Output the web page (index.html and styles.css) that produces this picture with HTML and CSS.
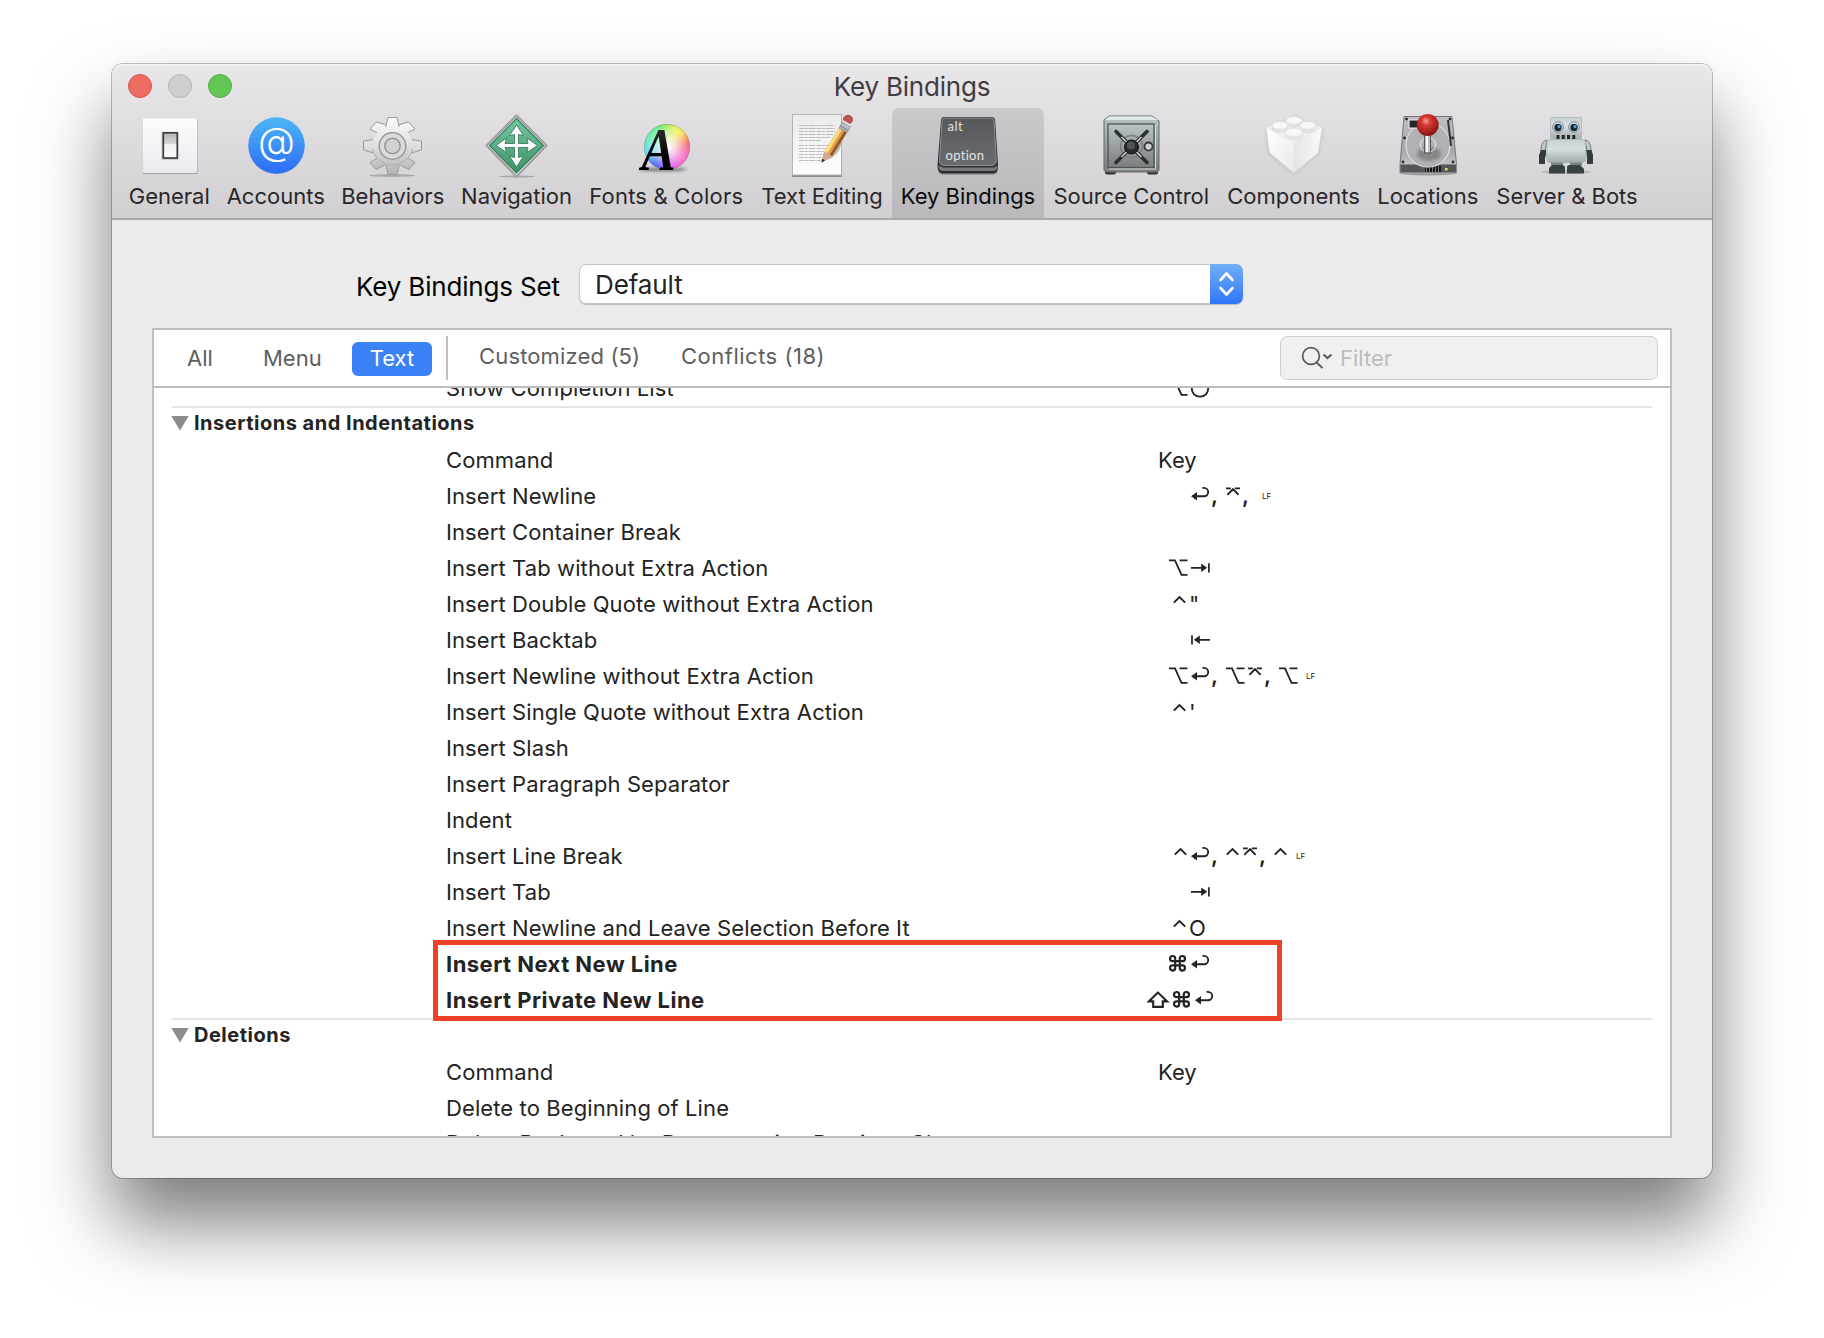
FILE: index.html
```html
<!DOCTYPE html>
<html lang="en">
<head>
<meta charset="utf-8">
<title>Key Bindings</title>
<link rel="stylesheet" href="styles.css">
</head>
<body>
<svg class="defs" width="0" height="0" aria-hidden="true">
  <defs>
    <linearGradient id="plate" x1="0" y1="0" x2="0" y2="1"><stop offset="0" stop-color="#fcfcfd"/><stop offset="1" stop-color="#e9ebef"/></linearGradient>
    <linearGradient id="toggle" x1="0" y1="0" x2="0" y2="1"><stop offset="0" stop-color="#b5b5b8"/><stop offset=".42" stop-color="#d4d4d6"/><stop offset=".45" stop-color="#f0f0f3"/><stop offset="1" stop-color="#fafafb"/></linearGradient>
    <linearGradient id="blue" x1="0" y1="0" x2="0" y2="1"><stop offset="0" stop-color="#4db7f6"/><stop offset="1" stop-color="#2c6cf5"/></linearGradient>
    <linearGradient id="metal" gradientUnits="userSpaceOnUse" x1="0" y1="10" x2="0" y2="66"><stop offset="0" stop-color="#fbfbfb"/><stop offset=".5" stop-color="#dededf"/><stop offset="1" stop-color="#b4b4b6"/></linearGradient>
    <linearGradient id="green" x1="0" y1="0" x2="0" y2="1"><stop offset="0" stop-color="#74c8a0"/><stop offset="1" stop-color="#3d9268"/></linearGradient>
    <linearGradient id="ink" x1="0" y1="0" x2="0" y2="1"><stop offset="0" stop-color="#444"/><stop offset=".6" stop-color="#000"/></linearGradient>
    <radialGradient id="glow"><stop offset="0" stop-color="#fff"/><stop offset=".35" stop-color="#fff" stop-opacity=".7"/><stop offset="1" stop-color="#fff" stop-opacity=".05"/></radialGradient>
    <linearGradient id="paper" x1="0" y1="0" x2="0" y2="1"><stop offset="0" stop-color="#ebebeb"/><stop offset="1" stop-color="#fdfdfd"/></linearGradient>
    <linearGradient id="key" x1="0" y1="0" x2="0" y2="1"><stop offset="0" stop-color="#56585b"/><stop offset="1" stop-color="#6a6c6f"/></linearGradient>
    <linearGradient id="safe" x1="0" y1="0" x2="0" y2="1"><stop offset="0" stop-color="#b9c5c8"/><stop offset="1" stop-color="#7b7d7e"/></linearGradient>
    <linearGradient id="drive" x1="0" y1="0" x2="0" y2="1"><stop offset="0" stop-color="#bfbfc3"/><stop offset=".7" stop-color="#a6a6ab"/><stop offset="1" stop-color="#c2c2c6"/></linearGradient>
    <radialGradient id="ball" cx=".42" cy=".32" r=".65"><stop offset="0" stop-color="#f6a29b"/><stop offset=".3" stop-color="#da3a35"/><stop offset="1" stop-color="#8c1414"/></radialGradient>
    <linearGradient id="bot" x1="0" y1="0" x2="0" y2="1"><stop offset="0" stop-color="#c6d0d3"/><stop offset=".4" stop-color="#d7dfe1"/><stop offset="1" stop-color="#a3abad"/></linearGradient>
    <linearGradient id="brickL" x1="0" y1="0" x2="1" y2="1"><stop offset="0" stop-color="#fff"/><stop offset="1" stop-color="#e9e9e9"/></linearGradient>
    <linearGradient id="brickR" x1="0" y1="0" x2="1" y2="0"><stop offset="0" stop-color="#e4e4e4"/><stop offset="1" stop-color="#fafafa"/></linearGradient>

    <symbol id="k-return" viewBox="0 0 20 36"><path d="M4 18.3h9a4.200 4.200 0 0 0 0-8.400H11.500" fill="none" stroke="#232323" stroke-width="1.900"/><path d="M0 18.300l6-4.200v8.400z" fill="#232323"/></symbol>
    <symbol id="k-enter" viewBox="0 0 16 36"><path d="M1.400 16.800l5.600-5.600 5.600 5.600M0 10.400h4.800M8.800 10.400H14" fill="none" stroke="#232323" stroke-width="1.900"/></symbol>
    <symbol id="k-option" viewBox="0 0 22 36"><path d="M0 10.300h6l6.500 14.600h6M10.600 10.300h7.900" fill="none" stroke="#232323" stroke-width="1.800"/></symbol>
    <symbol id="k-control" viewBox="0 0 16 36"><path d="M.8 16.600l5.700-5.500 5.700 5.500" fill="none" stroke="#232323" stroke-width="2"/></symbol>
    <symbol id="k-tab" viewBox="0 0 20 36"><path d="M0 17.800h11M17.900 13.200v9.300" fill="none" stroke="#232323" stroke-width="1.700"/><path d="M16.200 17.800l-6-4.200v8.400z" fill="#232323"/></symbol>
    <symbol id="k-backtab" viewBox="0 0 20 36"><path d="M8 17.800h11M1 13.200v9.300" fill="none" stroke="#232323" stroke-width="1.700"/><path d="M2.800 17.800l6-4.200v8.400z" fill="#232323"/></symbol>
    <symbol id="k-command" viewBox="0 0 22 36"><path d="M6.200 13.300v-.9a2.600 2.600 0 1 0-2.600 2.800h9.800a2.600 2.600 0 1 0-2.600-2.800v9.800a2.600 2.600 0 1 0 2.600-2.800H3.600a2.600 2.600 0 1 0 2.600 2.800z" fill="none" stroke="#232323" stroke-width="2.200"/></symbol>
    <symbol id="k-shift" viewBox="0 0 26 36"><path d="M11 10.600L1.800 19.400h4.400v5.500h9.600v-5.500h4.400z" fill="none" stroke="#232323" stroke-width="2.100"/></symbol>
    <symbol id="k-escape" viewBox="0 0 20 36"><path d="M4 12a8.200 8.200 0 1 0 10 0M9 17V8" fill="none" stroke="#232323" stroke-width="1.800"/></symbol>
  </defs>
</svg>

<main class="window">
  <header class="header">
    <div class="titlebar">
      <div class="lights"><span class="light close"></span><span class="light minimize"></span><span class="light zoom"></span></div>
      <h1 class="title">Key Bindings</h1>
    </div>
    <nav class="toolbar">
      <a class="tool"><svg class="tool-icon" viewBox="0 0 72 72">
        <rect x="9.500" y="11" width="55" height="55" rx="1.500" fill="#9da1a6"/><rect x="9.500" y="10.500" width="54.500" height="54.500" rx="1.500" fill="url(#plate)"/>
        <rect x="28.500" y="24" width="17" height="28" rx="1" fill="#000" opacity=".15"/><rect x="30.300" y="24.800" width="14" height="25.200" fill="url(#toggle)" stroke="#3c3c3e" stroke-width="1.700"/></svg>
        <span class="tool-label">General</span></a>
      <a class="tool"><svg class="tool-icon" viewBox="0 0 72 72">
        <circle cx="36.500" cy="38.300" r="28" fill="#8d98ad" opacity=".6"/><circle cx="36.500" cy="37.500" r="28.200" fill="url(#blue)"/>
        <text x="36.500" y="47" text-anchor="middle" class="at-sign">@</text></svg>
        <span class="tool-label">Accounts</span></a>
      <a class="tool"><svg class="tool-icon" viewBox="0 0 72 72">
        <ellipse cx="35" cy="67.500" rx="23" ry="1.500" fill="#888" opacity=".55"/>
        <g fill="url(#metal)" stroke="#97999c" stroke-width="1">
          <path d="M28.500 20l2.500-10.500h9l2.500 10.500z"/>
          <path d="M28.500 56l2.500 10.500h9l2.500-10.500z"/><path d="M17 31.500l-10.500 1.500v9l10.500 3z M54 31.500l10.500 1.500v9l-10.500 3z"/>
          <path d="M23 26l-10-5 6.500-7 9 2.500 2 6z M48 26l10-5-6.500-7-9 2.500-2 6z M22 49l-9 5.500 6 7 10-5zM49 49l9 5.500-6 7-10-5z"/>
        </g>
        <circle cx="35.500" cy="38" r="20.500" fill="url(#metal)"/><path d="M15.500 41a20.500 20.500 0 0 0 40 0" fill="none" stroke="#aeafb1"/>
        <circle cx="35.500" cy="38" r="13.300" fill="#dadadb" stroke="#8d8f93" stroke-width="1.300"/><circle cx="35.500" cy="38" r="7.700" fill="#d2d0d3" stroke="#8d8f93" stroke-width="1.300"/></svg>
        <span class="tool-label">Behaviors</span></a>
      <a class="tool"><svg class="tool-icon" viewBox="0 0 72 72">
        <ellipse cx="36" cy="68.500" rx="18" ry="1" fill="#888" opacity=".6"/>
        <path d="M35.500 7.500l30 30-30 31-30-31z" fill="#fafafa" stroke="#a2a2a2" stroke-width="2.400" stroke-linejoin="round"/>
        <path d="M35.500 10.500l27 27-27 27.500L8.500 37.500z" fill="url(#green)" stroke="#33795a" stroke-width="1.200"/>
        <path d="M35.500 17l7 10.500-5-1v9h9.500l-1-5.500 10.500 7.500-10.500 7 1-5H37.500v10l5-1.500-7 11-7-11 5 1.500V39.500H24l1.500 5L15 37.500l10.500-7.500-1.500 5.500h9.500v-9l-5 1z" fill="#fff" stroke="#2f7353" stroke-width=".8"/></svg>
        <span class="tool-label">Navigation</span></a>
      <a class="tool"><svg class="tool-icon" viewBox="0 0 72 72">
        <defs><filter id="soft" x="-50%" y="-50%" width="200%" height="200%"><feGaussianBlur stdDeviation="5"/></filter><filter id="dim" x="-50%" y="-150%" width="200%" height="400%"><feGaussianBlur stdDeviation="1.500"/></filter><clipPath id="wheel"><circle cx="37" cy="39" r="23"/></clipPath></defs>
        <ellipse cx="33" cy="61.500" rx="24" ry="2" fill="#333" opacity=".55" filter="url(#dim)"/>
        <g clip-path="url(#wheel)"><g filter="url(#soft)">
          <path d="M37 39L18 4h30z" fill="#63ea45"/><path d="M37 39l6-37 34 14z" fill="#f4f04d"/><path d="M37 39l35-22v34z" fill="#f2594f"/><path d="M37 39l36 5-22 34z" fill="#f45cc0"/><path d="M37 39l20 37H25z" fill="#d64bf3"/><path d="M37 39L34 76 2 60z" fill="#3d55f2"/><path d="M37 39L0 62V28z" fill="#4fdcf3"/><path d="M37 39L0 34 20 2z" fill="#58ea9c"/>
        </g><circle cx="37" cy="39" r="23" fill="url(#glow)"/></g>
        <circle cx="37" cy="39" r="22.600" fill="none" stroke="#8a8a8a" stroke-opacity=".45"/>
        <text x="11.500" y="62" class="letter-a" textLength="34" lengthAdjust="spacingAndGlyphs">A</text></svg>
        <span class="tool-label fonts">Fonts &amp; Colors</span></a>
      <a class="tool"><svg class="tool-icon" viewBox="0 0 72 72">
        <rect x="6" y="7" width="50" height="62" fill="#8f8f8f"/><rect x="6.500" y="6.500" width="49" height="60.500" fill="url(#paper)" stroke="#b2b2b2"/>
        <path d="M13 17.500h36M13 20.500h36M13 23.500h36M13 26.500h34M13 29.500h31M13 32.500h22M13 37.500h36M13 40.500h34M13 43.500h32M13 46.500h29M13 49.500h26M13 52.500h23" stroke="#bcbcbc" stroke-width="1" stroke-dasharray="5 .8 3 .8 7 .8"/>
        <path d="M37 53c9-2 16-7 18-16l.5-6-9 10z" fill="#555" opacity=".35"/>
        <path d="M36 54l2-10 15-24 8 4.500-15 24z" fill="#e0a04a"/><path d="M38 44l15-24 3 1.600L41 46z" fill="#f8dc80"/><path d="M46 48.500l15-24-2.600-1.500-15 24.500z" fill="#98592a"/>
        <path d="M36 54l2-10 4 1 4 3.500z" fill="#d9a98d"/><path d="M35.300 55l1-4.300 2.700 1.500z" fill="#222"/>
        <path d="M53 20l3.500-6 8 4.500-3.500 6z" fill="#b9bec1" stroke="#80868a" stroke-width=".8"/><path d="M54.300 18l8 4.500" stroke="#727b80"/><ellipse cx="62" cy="11.500" rx="4.600" ry="4.200" fill="#bd5353" stroke="#963838" stroke-width=".7"/><path d="M57 13l7.500 4.500" stroke="#e5e9eb" stroke-width="2"/></svg>
        <span class="tool-label">Text Editing</span></a>
      <a class="tool selected"><svg class="tool-icon" viewBox="0 0 72 72">
        <path d="M6 57c0 8 1 10 6 10h48c5 0 6-2 6-10z" fill="#555" opacity=".35"/>
        <path d="M13 9h46c3 0 4 1.500 4.200 4L66 57c0 6-1 8.500-6 8.500H12c-5 0-6.500-2.500-6.500-8.500L9 13c.3-3 1-4 4-4z" fill="#2d2e30"/>
        <path d="M6.500 57c2 2 4 2.500 8 2.500h44c4 0 6-.5 7-2.500 0 4-1 6-5.500 6H12c-4.500 0-5.500-2-5.500-6z" fill="#77787b"/>
        <path d="M14 10h44c3 0 4 1.500 4.200 4l2 37c.2 5-1.200 6.500-5 6.500H12.500c-4 0-5.200-1.500-5-6.500l2.500-37c.2-3 1-4 4-4z" fill="url(#key)" stroke="#8a9193"/>
        <text x="15.500" y="22.500" class="key-text">alt</text><text x="13.500" y="52" class="key-text" textLength="39">option</text></svg>
        <span class="tool-label">Key Bindings</span></a>
      <a class="tool"><svg class="tool-icon" viewBox="0 0 72 72">
        <rect x="10" y="62" width="11" height="4.500" rx="2" fill="#333"/><rect x="52" y="62" width="11" height="4.500" rx="2" fill="#333"/>
        <path d="M14 8h43l7 5v48c0 2-1 3-3 3H12c-2 0-3-1-3-3V12z" fill="url(#safe)" stroke="#64696b"/><path d="M14 8.500h43l6 3.500H10z" fill="#dfeaed"/>
        <rect x="13" y="16" width="46" height="43.500" fill="url(#safe)" stroke="#505557" stroke-width="1.300"/><path d="M60.500 17v44H14" fill="none" stroke="#d3d9da" stroke-width="1"/>
        <circle cx="36.500" cy="38.500" r="11" fill="none" stroke="#788083" stroke-width="1.600"/>
        <path d="M21 23.500l31 31M52 23.500l-31 31" stroke="#2b2d2e" stroke-width="3.600" stroke-linecap="round"/><path d="M26.500 29l20 20M46.500 29l-20 20" stroke="#d8dddd" stroke-width="1.400"/>
        <circle cx="36.500" cy="39" r="7" fill="#27292d" stroke="#111"/><circle cx="36" cy="37.500" r="4" fill="#50535a"/><circle cx="53.500" cy="38.500" r="4" fill="#cbd1d2" stroke="#35393b" stroke-width="1.800"/></svg>
        <span class="tool-label">Source Control</span></a>
      <a class="tool"><svg class="tool-icon" viewBox="0 0 72 72">
        <path d="M7 21l29-13 30 13-4 25-26 21-27-21z" fill="#999" opacity=".22" filter="url(#dim)"/>
        <path d="M36 10L8.500 19.500 36 35l28-15.500z" fill="#efefef"/><path d="M8.500 19.500L36 35v30L11.500 44.500z" fill="url(#brickL)"/><path d="M64 19.500L36 35v30l24-20.500z" fill="url(#brickR)"/>
        <g fill="#e2e2e2"><path d="M28 13v4c1 4 15 4 16 0v-4z"/><path d="M14 18v4c1 4 15 4 16 0v-4z"/><path d="M42 18v4c1 4 15 4 16 0v-4z"/><path d="M27.500 24.500v4c1 4.500 16 4.500 17 0v-4z"/></g>
        <g fill="#f8f8f8" stroke="#dcdcdc" stroke-width=".6"><ellipse cx="36" cy="12.500" rx="8" ry="3.700"/><ellipse cx="22" cy="17.500" rx="8" ry="3.800"/><ellipse cx="50" cy="17.500" rx="8" ry="3.800"/><ellipse cx="36" cy="24.500" rx="8.500" ry="4.200"/></g></svg>
        <span class="tool-label">Components</span></a>
      <a class="tool"><svg class="tool-icon" viewBox="0 0 72 72">
        <ellipse cx="36" cy="65" rx="29" ry="2.500" fill="#777" opacity=".6"/>
        <path d="M12 8.500h48l4.500 48H8z" fill="url(#drive)" stroke="#77777b"/><path d="M8 56.500h56.500v8H8z" fill="#55565b" stroke="#85868a"/><path d="M33 58h16v6H33z" fill="#17181a"/><path d="M34.500 58v6M37.500 58v6M40.500 58v6M43.500 58v6M46.500 58v6" stroke="#77787c"/><rect x="53" y="60" width="2.500" height="2.500" fill="#e1ed42"/>
        <circle cx="36" cy="37" r="22" fill="#b1b1b5" stroke="#dedee0" stroke-width="1.200"/><ellipse cx="37" cy="46" rx="12" ry="7" fill="#555" opacity=".45" filter="url(#dim)"/><circle cx="36" cy="37" r="7.500" fill="none" stroke="#ececee"/>
        <path d="M17 12h11v8H17z" fill="#25262a" stroke="#eee"/><path d="M56 12l3 26" stroke="#303134" stroke-width="2"/>
        <g fill="#292a2e"><circle cx="14.500" cy="11" r="1.400"/><circle cx="58" cy="11" r="1.400"/><circle cx="12.500" cy="30" r="1.400"/><circle cx="60.500" cy="30" r="1.400"/><circle cx="11" cy="54" r="1.400"/><circle cx="61" cy="54" r="1.400"/></g>
        <path d="M32.500 26h6v19h-6z" fill="#bdbdc0" stroke="#4c4c50" stroke-width=".9"/><path d="M35 27v17" stroke="#fff" stroke-width="1.700"/><circle cx="35.700" cy="17" r="11" fill="url(#ball)"/></svg>
        <span class="tool-label">Locations</span></a>
      <a class="tool"><svg class="tool-icon" viewBox="0 0 72 72">
        <ellipse cx="35" cy="64" rx="25" ry="2" fill="#888" opacity=".35"/>
        <path d="M19.500 9.500h31V31h-31z" fill="url(#bot)" stroke="#b4bec1"/><g stroke="#78868b" fill="#dbe6ea"><circle cx="27" cy="19" r="5.300"/><circle cx="43" cy="19" r="5.300"/></g><g fill="#182b3c"><circle cx="27" cy="19.500" r="3.700"/><circle cx="43" cy="19.500" r="3.700"/></g><g fill="#6aa2ca"><circle cx="28" cy="18.500" r="1.500"/><circle cx="44" cy="18.500" r="1.500"/></g>
        <path d="M25.500 27h3v4h-3zM30.800 27h3v4h-3zM36 27h3v4h-3zM41.300 27h3v4h-3z" fill="#222a2c"/>
        <path d="M16 32c-6 1-6 7-6.500 15h4zM54 32c6 1 6 7 6.500 15h-4z" fill="#bdc7c9" stroke="#768083"/><path d="M10 42h5v5l-1 3v6H8v-9zM55.500 42h5l1.500 5v9h-6v-6z" fill="#343b3e"/>
        <rect x="16" y="31.500" width="38.500" height="23" rx="3" fill="url(#bot)" stroke="#a3adb0" stroke-width=".7"/>
        <path d="M20 54.500h12v3H20zM39 54.500h12v3H39z" fill="#798285"/><path d="M21 57h11l2 2v6.500H18v-5.500zM38 57h11l4 4v4.500H36v-7z" fill="#394145"/></svg>
        <span class="tool-label">Server &amp; Bots</span></a>
    </nav>
  </header>

  <section class="set-row">
    <span class="set-label">Key Bindings Set</span>
    <div class="popup"><span class="popup-value">Default</span>
      <span class="stepper"><svg width="33" height="40" viewBox="0 0 33 40"><path d="M10.500 16l6-6.500 6 6.500M10.500 24l6 6.500 6-6.500" fill="none" stroke="#fff" stroke-width="2.600" stroke-linecap="round" stroke-linejoin="round"/></svg></span></div>
  </section>

  <section class="panel">
    <div class="filterbar">
      <div class="scopes">
        <span class="scope all">All</span>
        <span class="scope menu">Menu</span>
        <span class="scope active">Text</span>
      </div>
      <div class="states">
        <span class="scope customized">Customized (5)</span>
        <span class="scope conflicts">Conflicts (18)</span>
      </div>
      <div class="search"><svg width="34" height="24" viewBox="0 0 34 24"><circle cx="10" cy="10" r="8.400" fill="none" stroke="#5d5d5d" stroke-width="1.700"/><path d="M15.500 16.500l6 5.500" stroke="#5d5d5d" stroke-width="2"/><path d="M22.500 8.500l4 3.500 4-3.500" fill="none" stroke="#5d5d5d" stroke-width="2.200"/></svg><span class="placeholder">Filter</span></div>
    </div>

    <div class="list">
      <div class="group">
        <div class="row"><span class="command">Show Completion List</span><span class="keys"><span class="mods"><svg class="k22"><use href="#k-option"/></svg></span><svg class="k20"><use href="#k-escape"/></svg></span></div>
      </div>
      <div class="group">
        <h2 class="heading"><i class="disclosure"></i>Insertions and Indentations</h2>
        <div class="row"><span class="command">Command</span><span class="keys key-head">Key</span></div>
        <div class="row"><span class="command">Insert Newline</span><span class="keys"><span class="mods"></span><svg class="k20"><use href="#k-return"/></svg><span class="comma">,</span><svg class="k16"><use href="#k-enter"/></svg><span class="comma">,</span><span class="lf">LF</span></span></div>
        <div class="row"><span class="command">Insert Container Break</span></div>
        <div class="row"><span class="command">Insert Tab without Extra Action</span><span class="keys"><span class="mods"><svg class="k22"><use href="#k-option"/></svg></span><svg class="k20"><use href="#k-tab"/></svg></span></div>
        <div class="row"><span class="command">Insert Double Quote without Extra Action</span><span class="keys"><span class="mods typed"><svg class="k16"><use href="#k-control"/></svg></span>"</span></div>
        <div class="row"><span class="command">Insert Backtab</span><span class="keys"><span class="mods"></span><svg class="k20"><use href="#k-backtab"/></svg></span></div>
        <div class="row"><span class="command">Insert Newline without Extra Action</span><span class="keys"><span class="mods"><svg class="k22"><use href="#k-option"/></svg></span><svg class="k20"><use href="#k-return"/></svg><span class="comma">,</span><svg class="k22"><use href="#k-option"/></svg><svg class="k16"><use href="#k-enter"/></svg><span class="comma">,</span><svg class="k22"><use href="#k-option"/></svg><span class="lf">LF</span></span></div>
        <div class="row"><span class="command">Insert Single Quote without Extra Action</span><span class="keys"><span class="mods typed"><svg class="k16"><use href="#k-control"/></svg></span>'</span></div>
        <div class="row"><span class="command">Insert Slash</span></div>
        <div class="row"><span class="command">Insert Paragraph Separator</span></div>
        <div class="row"><span class="command">Indent</span></div>
        <div class="row"><span class="command">Insert Line Break</span><span class="keys"><span class="mods"><svg class="k17"><use href="#k-control"/></svg></span><svg class="k20"><use href="#k-return"/></svg><span class="comma">,</span><svg class="k17"><use href="#k-control"/></svg><svg class="k16"><use href="#k-enter"/></svg><span class="comma">,</span><svg class="k17"><use href="#k-control"/></svg><span class="lf">LF</span></span></div>
        <div class="row"><span class="command">Insert Tab</span><span class="keys"><span class="mods"></span><svg class="k20"><use href="#k-tab"/></svg></span></div>
        <div class="row"><span class="command">Insert Newline and Leave Selection Before It</span><span class="keys"><span class="mods typed"><svg class="k16"><use href="#k-control"/></svg></span>O</span></div>
        <div class="row custom"><span class="command">Insert Next New Line</span><span class="keys"><span class="mods"><svg class="k22"><use href="#k-command"/></svg></span><svg class="k20"><use href="#k-return"/></svg></span></div>
        <div class="row custom"><span class="command">Insert Private New Line</span><span class="keys shifted"><span class="mods"><svg class="k26"><use href="#k-shift"/></svg><svg class="k22"><use href="#k-command"/></svg></span><svg class="k20"><use href="#k-return"/></svg></span></div>
      </div>
      <div class="group">
        <h2 class="heading"><i class="disclosure"></i>Deletions</h2>
        <div class="row"><span class="command">Command</span><span class="keys key-head">Key</span></div>
        <div class="row"><span class="command">Delete to Beginning of Line</span></div>
        <div class="row last"><span class="command">Delete Backward by Decomposing Previous Character</span></div>
      </div>
    </div>
  </section>
  <div class="highlight"></div>
</main>
</body>
</html>
```

FILE: styles.css
```css
* { box-sizing: border-box; }
body {
  margin: 0;
  width: 1824px;
  height: 1338px;
  padding: 64px 112px 0;
  overflow: hidden;
  background: #fff;
  font-family: Inter, "Liberation Sans", sans-serif;
  color: #232323;
}
.defs { position: absolute; }
svg { display: block; flex: none; }
h1, h2 { margin: 0; }

.window {
  position: relative;
  width: 1600px;
  height: 1114px;
  border-radius: 11px;
  background: #ebebeb;
  box-shadow: 0 0 0 1px rgba(0, 0, 0, .24), 0 45px 76px rgba(0, 0, 0, .52);
}
.header {
  height: 156px;
  border-radius: 11px 11px 0 0;
  border-bottom: 2px solid #aaa9aa;
  background: linear-gradient(#e9e7ea, #d1cfd1);
  box-shadow: inset 0 2px 0 #f4f3f5;
}
.titlebar {
  display: grid;
  grid-template-columns: 200px 1fr 200px;
  height: 44px;
}
.lights { display: flex; gap: 16px; padding: 10px 0 0 16px; }
.light { width: 24px; height: 24px; border-radius: 50%; border: 1px solid; }
.close { background: #ed6b60; border-color: #d9544b; }
.minimize { background: #d0cfd0; border-color: #b5b4b6; }
.zoom { background: #62c654; border-color: #4fae43; }
.title {
  text-align: center;
  font-size: 26px;
  font-weight: 400;
  line-height: 46px;
  letter-spacing: -.2px;
  color: #3f3d40;
}
.toolbar {
  display: grid;
  grid-template-columns: 98.5px 114.5px 119.5px 128px 171.5px 140px 152px 174.5px 150px 118.5px 160px;
  height: 110px;
  padding-left: 8px;
}
.tool {
  display: flex;
  flex-direction: column;
  align-items: center;
  color: #29272a;
}
.tool.selected {
  border-radius: 8px 8px 0 0;
  background: linear-gradient(#cac8cb, #bab8ba);
  color: #0a0a0a;
}
.tool-icon { width: 72px; height: 72px; }
.tool-label { margin-top: -2px; font-size: 22px; line-height: 36px; white-space: nowrap; }
.fonts { letter-spacing: .2px; }
.at-sign { font: 300 38px Inter, sans-serif; fill: #fff; }
.letter-a { font: italic bold 62px "Liberation Serif", serif; fill: url(#ink); }
.key-text { font: 13px Lato, sans-serif; letter-spacing: .5px; fill: #e4e4e4; }

.set-row { display: flex; padding: 44px 0 0 244px; height: 108px; }
.set-label { width: 223px; font-size: 26px; line-height: 46px; letter-spacing: -.17px; color: #000; white-space: nowrap; }
.popup {
  display: flex;
  justify-content: space-between;
  width: 664px;
  height: 40px;
  border-radius: 7px;
  overflow: hidden;
  background: #fff;
  box-shadow: inset 0 0 0 1px #c6c6c6, 0 1px 1px rgba(0, 0, 0, .2);
}
.popup-value { padding-left: 16px; font-size: 26px; line-height: 41px; letter-spacing: -.1px; }
.stepper { background: linear-gradient(#72aff7, #2f76f8); }

.panel {
  width: 1520px;
  height: 810px;
  margin: 0 40px;
  border: 2px solid #bfbfbf;
  background: #fff;
}
.filterbar {
  display: flex;
  height: 58px;
  border-bottom: 2px solid #bfbfbf;
  padding: 6px 12px 0 33px;
  font-size: 22px;
  color: #5e5e5e;
}
.scopes { display: flex; width: 261px; height: 44px; padding-top: 6px; border-right: 2px solid #bfbfbf; }
.scope { height: 34px; line-height: 32px; white-space: nowrap; }
.all { width: 76px; }
.menu { width: 89px; }
.active { width: 80px; border-radius: 6px; background: #3b82f7; color: #fff; text-align: center; }
.states { display: flex; padding: 4px 0 0 31px; }
.customized { width: 202px; letter-spacing: .15px; }
.conflicts { letter-spacing: .5px; }
.search {
  display: flex;
  align-items: center;
  width: 378px;
  height: 44px;
  margin-left: auto;
  padding-left: 20px;
  border: 1.5px solid #cfcfcf;
  border-radius: 7px;
  background: #f0f0f0;
}
.placeholder { padding-left: 5px; color: #bdbdbd; }

.list { height: 748px; overflow: hidden; padding: 0 18px; }
.group { border-bottom: 2px solid #e5e5e5; }
.group:first-child { margin-top: -18px; }
.heading {
  display: flex;
  align-items: center;
  height: 34px;
  padding-bottom: 4px;
  font-size: 20px;
  font-weight: 700;
  letter-spacing: .5px;
  white-space: nowrap;
}
.disclosure {
  width: 18px;
  height: 15px;
  margin: 0 5px 0 -1px;
  background: #8c8c8c;
  clip-path: polygon(0 0, 100% 0, 50% 100%);
}
.row { display: flex; height: 36px; padding-left: 274px; font-size: 22px; line-height: 36px; }
.command { width: 691px; letter-spacing: .1px; white-space: nowrap; }
.custom { font-weight: 700; }
.custom .command { letter-spacing: .47px; }
.last { margin-top: -1px; }
.keys { display: flex; }
.key-head { padding-left: 21px; }
.mods { display: flex; justify-content: flex-end; width: 54px; }
.typed { width: 52px; }
.shifted { padding-left: 4px; }
.k16 { width: 16px; height: 36px; }
.k17 { width: 17px; height: 36px; }
.k17 use { transform: translateX(-.5px); }
.k20 { width: 20px; height: 36px; }
.k22 { width: 22px; height: 36px; }
.k26 { width: 26px; height: 36px; }
.comma { width: 15px; font-weight: 600; line-height: 34px; }
.lf { padding-left: 5px; font-size: 8px; line-height: 36px; }
.highlight {
  position: absolute;
  left: 320.5px;
  top: 875.5px;
  width: 849px;
  height: 81px;
  border: 5px solid #ef4127;
}
```
